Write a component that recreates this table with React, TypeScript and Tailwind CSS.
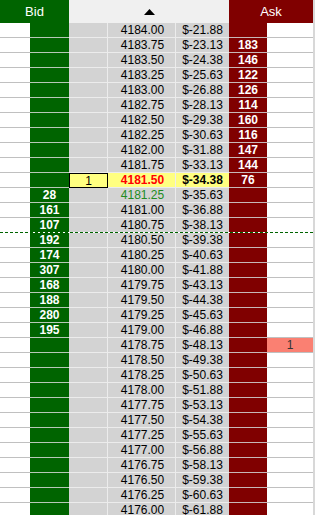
import React from "react";

const pnl = [
  "21.88","23.13","24.38","25.63","26.88","28.13","29.38","30.63","31.88","33.13",
  "34.38","35.63","36.88","38.13","39.38","40.63","41.88","43.13","44.38","45.63",
  "46.88","48.13","49.38","50.63","51.88","53.13","54.38","55.63","56.88","58.13",
  "59.38","60.63","61.88",
];

const askVals: Record<number, string> = {
  1: "183", 2: "146", 3: "122", 4: "126", 5: "114", 6: "160", 7: "116", 8: "147", 9: "144", 10: "76",
};
const bidVals: Record<number, string> = {
  11: "28", 12: "161", 13: "107", 14: "192", 15: "174", 16: "307", 17: "168", 18: "188", 19: "280", 20: "195",
};

export default function App() {
  const rows = Array.from({ length: 33 }, (_, i) => i);
  return (
    <div
      className="w-[315px] h-[515px] overflow-hidden bg-white text-[12px] leading-[14px] text-black"
      style={{ fontFamily: '"Liberation Sans", Arial, sans-serif' }}
    >
      <div className="w-[313px] border-r-2 border-[#d8d8d8] box-content">
        {/* header */}
        <div className="flex h-[23px]">
          <div className="w-[69px] bg-[#006400] text-white text-[13px] flex items-center justify-center">Bid</div>
          <div className="w-[160px] bg-[#f0f0f0] flex items-center justify-center">
            <svg width="11" height="6" viewBox="0 0 11 6"><path d="M5.5 0 L11 6 L0 6 Z" fill="#000" /></svg>
          </div>
          <div className="w-[84px] bg-[#800000] text-white text-[13px] flex items-center justify-center">Ask</div>
        </div>
        {rows.map((i) => {
          const price = (4184 - i * 0.25).toFixed(2);
          const hl = i === 10;
          const dashed = i === 13;
          const rowBorder = dashed ? "border-b border-dashed border-[#006400]" : "";
          return (
            <div key={i} className={`relative flex h-[15px] ${rowBorder}`}>
              <div className={`w-[30px] h-[14px] bg-white ${dashed ? "" : "border-b border-[#c0c0c0] h-[15px]"}`} />
              <div className={`w-[39px] bg-[#006400] text-white font-bold text-center ${dashed ? "h-[14px]" : "h-[15px] border-b border-[#b8c8b8]"}`}>
                {bidVals[i] ?? ""}
              </div>
              <div
                className={`w-[39px] text-center ${dashed ? "h-[14px]" : "h-[15px] border-b"} border-r ${
                  hl ? "bg-[#ffff80] border border-black h-[15px]" : "bg-[#d3d3d3] border-[#ececec]"
                }`}
              >
                {hl ? "1" : ""}
              </div>
              <div
                className={`w-[68px] text-center border-r border-[#ececec] ${dashed ? "h-[14px]" : "h-[15px] border-b"} ${
                  hl ? "bg-[#ffff80] text-[#ff0000] font-bold" : i === 11 ? "bg-[#d3d3d3] text-[#228b22]" : "bg-[#d3d3d3]"
                }`}
              >
                <span className="pl-[2px]">{price}</span>
              </div>
              <div
                className={`w-[53px] text-center border-[#ececec] ${dashed ? "h-[14px]" : "h-[15px] border-b"} ${
                  hl ? "bg-[#ffff80] font-bold" : "bg-[#d3d3d3]"
                }`}
              >
                $-{pnl[i]}
              </div>
              <div className={`w-[38px] bg-[#800000] text-white font-bold text-center ${dashed ? "h-[14px]" : "h-[15px] border-b border-[#c8b8b8]"}`}>
                {askVals[i] ?? ""}
              </div>
              <div
                className={`w-[46px] text-center ${dashed ? "h-[14px]" : "h-[15px] border-b border-[#c0c0c0]"} ${
                  i === 21 ? "bg-[#fa8072] text-[#333]" : "bg-white"
                }`}
              >
                {i === 21 ? "1" : ""}
              </div>
            </div>
          );
        })}
      </div>
    </div>
  );
}
